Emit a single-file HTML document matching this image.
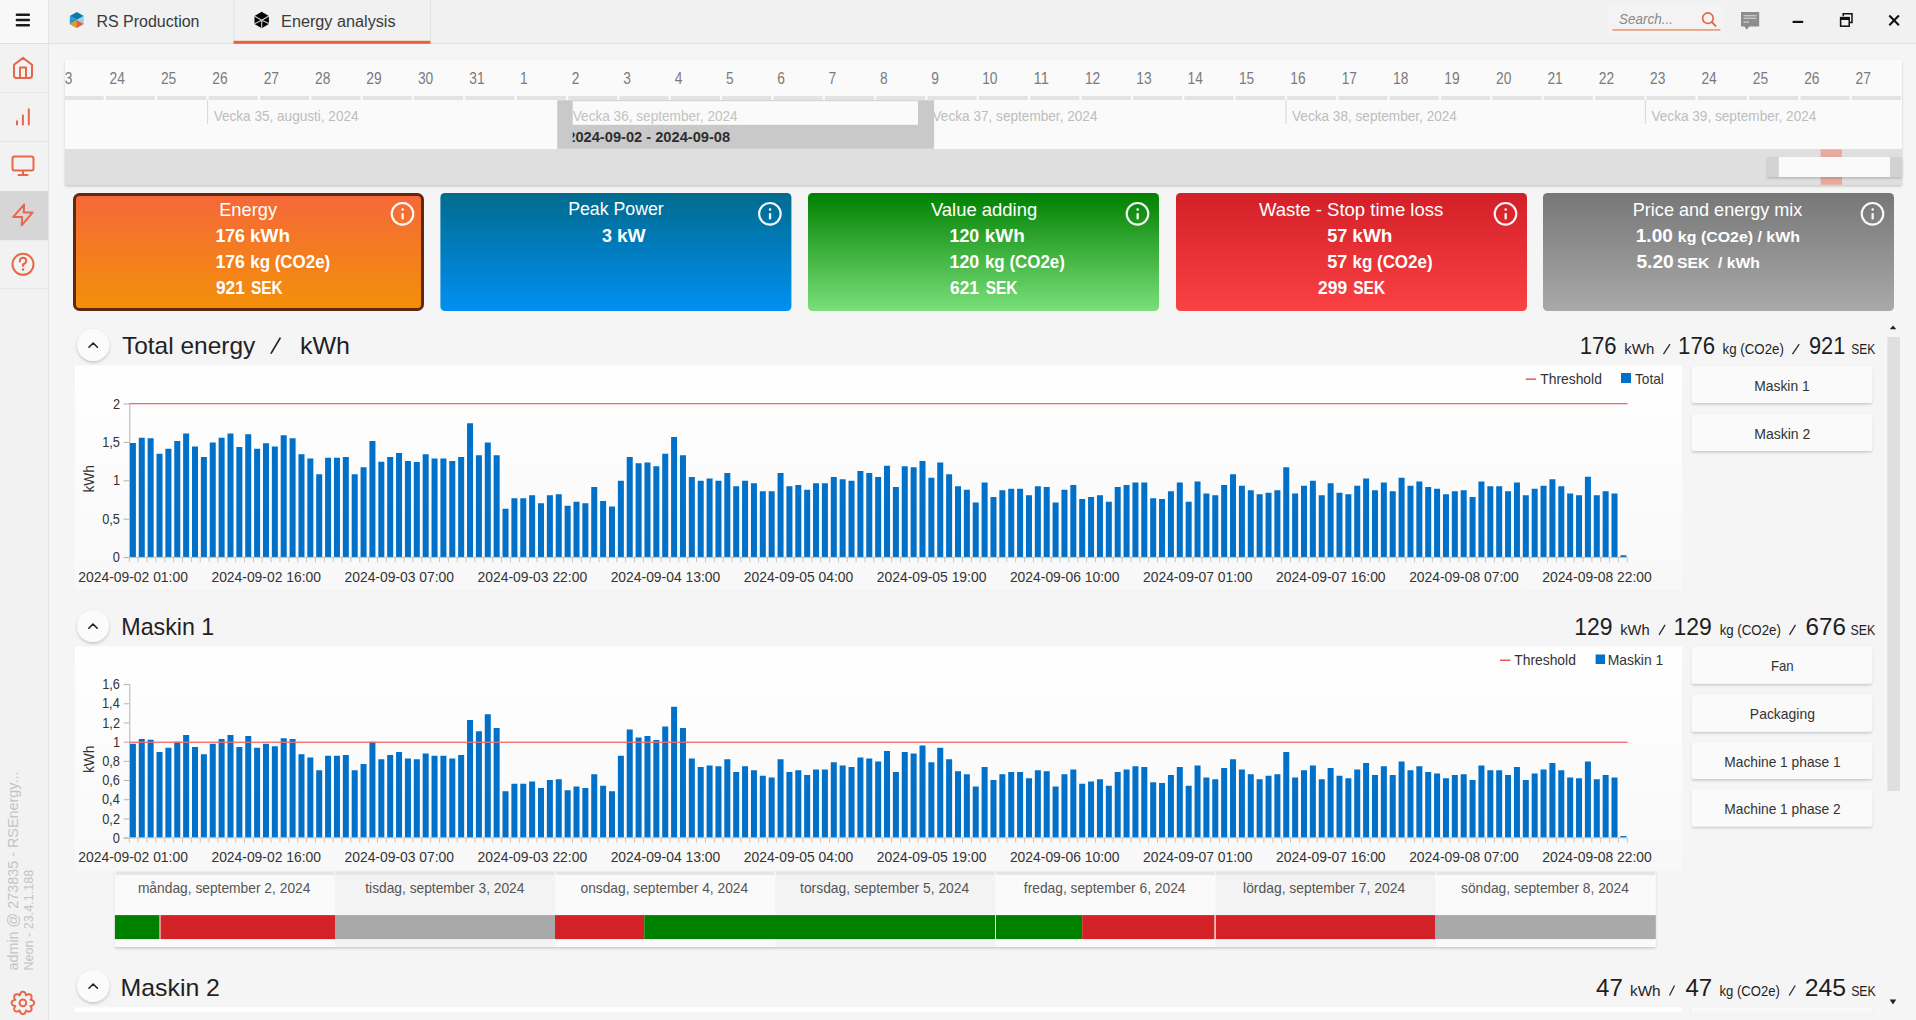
<!DOCTYPE html><html><head><meta charset="utf-8"><title>Energy analysis</title><style>html,body{margin:0;padding:0;background:#f5f5f5;overflow:hidden;width:1916px;height:1020px}svg{display:block;font-family:"Liberation Sans", sans-serif}text{font-family:"Liberation Sans", sans-serif}</style></head><body>
<svg width="1916" height="1020" viewBox="0 0 1916 1020">
<defs>
<linearGradient id="gOr" x1="0" y1="0" x2="0" y2="1"><stop offset="0" stop-color="#f5683a"/><stop offset="1" stop-color="#f39008"/></linearGradient>
<linearGradient id="gBl" x1="0" y1="0" x2="0" y2="1"><stop offset="0" stop-color="#006b8e"/><stop offset="1" stop-color="#0090f2"/></linearGradient>
<linearGradient id="gGr" x1="0" y1="0" x2="0" y2="1"><stop offset="0" stop-color="#008000"/><stop offset="1" stop-color="#7ae07a"/></linearGradient>
<linearGradient id="gRd" x1="0" y1="0" x2="0" y2="1"><stop offset="0" stop-color="#d31f28"/><stop offset="1" stop-color="#fa4244"/></linearGradient>
<linearGradient id="gGy" x1="0" y1="0" x2="0" y2="1"><stop offset="0" stop-color="#777777"/><stop offset="1" stop-color="#a9a9a9"/></linearGradient>
<linearGradient id="gPanel" x1="0" y1="0" x2="0" y2="1"><stop offset="0" stop-color="#ffffff"/><stop offset="0.12" stop-color="#fefefe"/><stop offset="1" stop-color="#f8f8f8"/></linearGradient>
<filter id="sh" x="-10%" y="-10%" width="120%" height="140%"><feDropShadow dx="0" dy="1.5" stdDeviation="1.2" flood-color="#000" flood-opacity="0.18"/></filter>
<filter id="shc" x="-30%" y="-30%" width="160%" height="160%"><feDropShadow dx="0" dy="1.5" stdDeviation="1.5" flood-color="#000" flood-opacity="0.22"/></filter>
<clipPath id="clipTL"><rect x="65" y="60" width="1837" height="125"/></clipPath>
<clipPath id="clipSel"><rect x="572.7" y="101" width="345.3" height="48"/></clipPath>
</defs>
<rect x="0.00" y="0.00" width="1916.00" height="1020.00" fill="#f5f5f5" />
<rect x="0.00" y="0.00" width="1916.00" height="43.00" fill="#f1f1f1" />
<rect x="0.00" y="0.00" width="48.00" height="43.00" fill="#f8f8f8" />
<rect x="48.00" y="0.00" width="1.00" height="43.00" fill="#e6e6e6" />
<rect x="0.00" y="43.00" width="1916.00" height="1.00" fill="#e0e0e0" />
<rect x="15.7" y="13.5" width="14.3" height="2.6" rx="1" fill="#1a1a1a"/>
<rect x="15.7" y="18.7" width="14.3" height="2.6" rx="1" fill="#1a1a1a"/>
<rect x="15.7" y="24" width="14.3" height="2.6" rx="1" fill="#1a1a1a"/>
<g transform="translate(76.8,19.9)">
<path d="M0,-8 L7,-4 L0,0 L-7,-4 Z" fill="#0a7ab0"/>
<path d="M-7,-4 L0,0 L0,8 L-7,4 Z" fill="#2a98cf"/>
<path d="M7,-4 L7,4 L0,0 Z" fill="#8fd6f5"/>
<path d="M-7,4 L0,0 L0,8 Z" fill="#f39a1c"/>
<path d="M0,0 L7,4 L0,8 Z" fill="#e8603c"/>
</g>
<text x="96.39" y="26.50" font-size="16" fill="#3a3a3a" textLength="103.15" lengthAdjust="spacingAndGlyphs">RS Production</text>
<rect x="233.50" y="0.00" width="1.00" height="43.00" fill="#e4e4e4" />
<rect x="430.00" y="0.00" width="1.00" height="43.00" fill="#e4e4e4" />
<rect x="233.50" y="40.80" width="197.00" height="3.00" fill="#e8603c" />
<g transform="translate(261.7,20.0)">
<path d="M0,-8.2 L7.2,-4.1 L7.2,4.1 L0,8.2 L-7.2,4.1 L-7.2,-4.1 Z" fill="#050505"/>
<path d="M-7.2,-4 L0,0.3 L7.2,-4 M0,0.3 V8.4 M0,0.3 L-7.2,3.7 M0,0.3 L7.2,3.5" stroke="#f1f1f1" stroke-width="1.15" fill="none" opacity="0.85"/>
</g>
<text x="281.07" y="26.50" font-size="16" fill="#3a3a3a" textLength="114.52" lengthAdjust="spacingAndGlyphs">Energy analysis</text>
<rect x="1606.60" y="5.00" width="117.00" height="31.00" fill="#f3f3f3" />
<text x="1619.12" y="24.20" font-size="14" fill="#8a8a8a" font-style="italic" textLength="53.83" lengthAdjust="spacingAndGlyphs">Search...</text>
<rect x="1612.40" y="29.00" width="108.00" height="1.80" fill="#f2a07c" />
<circle cx="1707.9" cy="18.2" r="5.3" stroke="#e8603c" stroke-width="1.6" fill="none"/>
<line x1="1711.8" y1="22.1" x2="1715.6" y2="25.8" stroke="#e8603c" stroke-width="1.8" stroke-linecap="round"/>
<path d="M1741,12 H1759.2 V26.4 H1749.5 L1746.5,29.7 L1744.5,26.4 H1741 Z" fill="#8c8c8c"/>
<rect x="1743.50" y="15.20" width="13.00" height="1.10" fill="#d8d8d8" />
<rect x="1743.50" y="17.70" width="13.00" height="1.10" fill="#d8d8d8" />
<rect x="1743.50" y="21.50" width="5.50" height="1.10" fill="#d8d8d8" />
<rect x="1792.60" y="20.80" width="10.60" height="2.20" fill="#111" />
<path d="M1843.2,16.3 V13.8 H1852 V22.5 H1849.5" stroke="#111" stroke-width="1.5" fill="none"/>
<rect x="1840.6" y="17.6" width="8.6" height="8.6" stroke="#111" stroke-width="1.5" fill="none"/>
<rect x="1840.60" y="17.60" width="8.60" height="2.40" fill="#111" />
<path d="M1889.3,15.6 L1898.9,25.2 M1898.9,15.6 L1889.3,25.2" stroke="#111" stroke-width="2.1"/>
<rect x="0.00" y="44.00" width="48.00" height="976.00" fill="#f2f2f2" />
<rect x="48.00" y="44.00" width="1.00" height="976.00" fill="#e4e4e4" />
<rect x="0.00" y="92.00" width="48.00" height="1.00" fill="#e6e6e6" />
<rect x="0.00" y="141.00" width="48.00" height="1.00" fill="#e6e6e6" />
<rect x="0.00" y="239.50" width="48.00" height="1.00" fill="#e6e6e6" />
<rect x="0.00" y="288.00" width="48.00" height="1.00" fill="#e6e6e6" />
<rect x="0.00" y="191.00" width="48.00" height="49.00" fill="#d6d6d6" />
<path d="M14,75.6 V64.8 L23,57.9 L32,64.8 V75.6 Q32,78 29.6,78 H16.4 Q14,78 14,75.6 Z M20,78 V67.6 H26 V78" stroke="#e8664a" stroke-width="2" fill="none" stroke-linecap="round" stroke-linejoin="round"/>
<path d="M17,124.6 V121.2 M22.9,124.6 V115.4 M28.8,124.6 V109.3" stroke="#e8664a" stroke-width="2" fill="none" stroke-linecap="round" stroke-linejoin="round" stroke-width="2.2"/>
<rect x="12.5" y="156.5" width="21" height="14" rx="2" stroke="#e8664a" stroke-width="2" fill="none" stroke-linecap="round" stroke-linejoin="round"/>
<path d="M23,171 V174.5 M18.5,175 H27.5" stroke="#e8664a" stroke-width="2" fill="none" stroke-linecap="round" stroke-linejoin="round"/>
<path d="M24.1,204.6 L13.3,216.9 H22.2 L21.7,225.3 L32.5,212.6 H23.7 Z" stroke="#e8664a" stroke-width="2" fill="none" stroke-linecap="round" stroke-linejoin="round"/>
<circle cx="23" cy="264.3" r="10.5" stroke="#e8664a" stroke-width="2" fill="none" stroke-linecap="round" stroke-linejoin="round"/>
<path d="M19.8,261.5 Q19.8,257.8 23,257.8 Q26.3,257.8 26.3,261 Q26.3,263 23,264.5 V266" stroke="#e8664a" stroke-width="2" fill="none" stroke-linecap="round" stroke-linejoin="round" stroke-width="1.9"/>
<circle cx="23" cy="269.5" r="1.2" fill="#e8603c"/>
<text transform="translate(18,970.6) rotate(-90)" font-size="15" fill="#c4c4c4" textLength="199" lengthAdjust="spacingAndGlyphs">admin @ 273835 - RSEnergy...</text>
<text transform="translate(32.7,970.6) rotate(-90)" font-size="13.5" fill="#c4c4c4" textLength="100.8" lengthAdjust="spacingAndGlyphs">Neon - 23.4.1.188</text>
<path d="M34.15,1002.90 L34.13,1003.19 L34.07,1003.49 L33.98,1003.77 L33.85,1004.05 L33.68,1004.32 L33.48,1004.58 L33.25,1004.82 L32.98,1005.04 L32.69,1005.25 L32.38,1005.44 L32.04,1005.61 L31.68,1005.75 L31.29,1005.87 L30.89,1005.97 L30.43,1006.02 L30.72,1006.38 L30.94,1006.73 L31.12,1007.09 L31.27,1007.45 L31.40,1007.81 L31.49,1008.16 L31.55,1008.51 L31.57,1008.86 L31.57,1009.20 L31.53,1009.52 L31.45,1009.83 L31.35,1010.12 L31.22,1010.39 L31.05,1010.63 L30.85,1010.85 L30.63,1011.05 L30.39,1011.22 L30.12,1011.35 L29.83,1011.45 L29.52,1011.53 L29.20,1011.57 L28.86,1011.57 L28.51,1011.55 L28.16,1011.49 L27.81,1011.40 L27.45,1011.27 L27.09,1011.12 L26.73,1010.94 L26.38,1010.72 L26.02,1010.43 L25.97,1010.89 L25.87,1011.29 L25.75,1011.68 L25.61,1012.04 L25.44,1012.38 L25.25,1012.69 L25.04,1012.98 L24.82,1013.25 L24.58,1013.48 L24.32,1013.68 L24.05,1013.85 L23.77,1013.98 L23.49,1014.07 L23.19,1014.13 L22.90,1014.15 L22.61,1014.13 L22.31,1014.07 L22.03,1013.98 L21.75,1013.85 L21.48,1013.68 L21.22,1013.48 L20.98,1013.25 L20.76,1012.98 L20.55,1012.69 L20.36,1012.38 L20.19,1012.04 L20.05,1011.68 L19.93,1011.29 L19.83,1010.89 L19.78,1010.43 L19.42,1010.72 L19.07,1010.94 L18.71,1011.12 L18.35,1011.27 L17.99,1011.40 L17.64,1011.49 L17.29,1011.55 L16.94,1011.57 L16.60,1011.57 L16.28,1011.53 L15.97,1011.45 L15.68,1011.35 L15.41,1011.22 L15.17,1011.05 L14.95,1010.85 L14.75,1010.63 L14.58,1010.39 L14.45,1010.12 L14.35,1009.83 L14.27,1009.52 L14.23,1009.20 L14.23,1008.86 L14.25,1008.51 L14.31,1008.16 L14.40,1007.81 L14.53,1007.45 L14.68,1007.09 L14.86,1006.73 L15.08,1006.38 L15.37,1006.02 L14.91,1005.97 L14.51,1005.87 L14.12,1005.75 L13.76,1005.61 L13.42,1005.44 L13.11,1005.25 L12.82,1005.04 L12.55,1004.82 L12.32,1004.58 L12.12,1004.32 L11.95,1004.05 L11.82,1003.77 L11.73,1003.49 L11.67,1003.19 L11.65,1002.90 L11.67,1002.61 L11.73,1002.31 L11.82,1002.03 L11.95,1001.75 L12.12,1001.48 L12.32,1001.22 L12.55,1000.98 L12.82,1000.76 L13.11,1000.55 L13.42,1000.36 L13.76,1000.19 L14.12,1000.05 L14.51,999.93 L14.91,999.83 L15.37,999.78 L15.08,999.42 L14.86,999.07 L14.68,998.71 L14.53,998.35 L14.40,997.99 L14.31,997.64 L14.25,997.29 L14.23,996.94 L14.23,996.60 L14.27,996.28 L14.35,995.97 L14.45,995.68 L14.58,995.41 L14.75,995.17 L14.95,994.95 L15.17,994.75 L15.41,994.58 L15.68,994.45 L15.97,994.35 L16.28,994.27 L16.60,994.23 L16.94,994.23 L17.29,994.25 L17.64,994.31 L17.99,994.40 L18.35,994.53 L18.71,994.68 L19.07,994.86 L19.42,995.08 L19.78,995.37 L19.83,994.91 L19.93,994.51 L20.05,994.12 L20.19,993.76 L20.36,993.42 L20.55,993.11 L20.76,992.82 L20.98,992.55 L21.22,992.32 L21.48,992.12 L21.75,991.95 L22.03,991.82 L22.31,991.73 L22.61,991.67 L22.90,991.65 L23.19,991.67 L23.49,991.73 L23.77,991.82 L24.05,991.95 L24.32,992.12 L24.58,992.32 L24.82,992.55 L25.04,992.82 L25.25,993.11 L25.44,993.42 L25.61,993.76 L25.75,994.12 L25.87,994.51 L25.97,994.91 L26.02,995.37 L26.38,995.08 L26.73,994.86 L27.09,994.68 L27.45,994.53 L27.81,994.40 L28.16,994.31 L28.51,994.25 L28.86,994.23 L29.20,994.23 L29.52,994.27 L29.83,994.35 L30.12,994.45 L30.39,994.58 L30.63,994.75 L30.85,994.95 L31.05,995.17 L31.22,995.41 L31.35,995.68 L31.45,995.97 L31.53,996.28 L31.57,996.60 L31.57,996.94 L31.55,997.29 L31.49,997.64 L31.40,997.99 L31.27,998.35 L31.12,998.71 L30.94,999.07 L30.72,999.42 L30.43,999.78 L30.89,999.83 L31.29,999.93 L31.68,1000.05 L32.04,1000.19 L32.38,1000.36 L32.69,1000.55 L32.98,1000.76 L33.25,1000.98 L33.48,1001.22 L33.68,1001.48 L33.85,1001.75 L33.98,1002.03 L34.07,1002.31 L34.13,1002.61 Z" stroke="#e8664a" stroke-width="2" fill="none" stroke-linecap="round" stroke-linejoin="round" stroke-width="2"/>
<circle cx="22.9" cy="1002.9" r="3.3" stroke="#e8664a" stroke-width="2" fill="none" stroke-linecap="round" stroke-linejoin="round" stroke-width="2"/>
<g filter="url(#sh)">
<rect x="65.00" y="60.00" width="1837.00" height="125.00" fill="#fafafa" />
</g>
<rect x="65.00" y="149.00" width="1837.00" height="36.00" fill="#dfdfdf" />
<g clip-path="url(#clipTL)">
<text x="64.68" y="84.40" font-size="16" fill="#7a7a7a" textLength="7.65" lengthAdjust="spacingAndGlyphs">3</text>
<rect x="54.65" y="96.00" width="49.00" height="4.00" fill="#e3e3e3" />
<text x="109.61" y="84.40" font-size="16" fill="#7a7a7a" textLength="15.31" lengthAdjust="spacingAndGlyphs">24</text>
<rect x="106.00" y="96.00" width="49.00" height="4.00" fill="#e3e3e3" />
<text x="160.96" y="84.40" font-size="16" fill="#7a7a7a" textLength="15.31" lengthAdjust="spacingAndGlyphs">25</text>
<rect x="157.35" y="96.00" width="49.00" height="4.00" fill="#e3e3e3" />
<text x="212.31" y="84.40" font-size="16" fill="#7a7a7a" textLength="15.31" lengthAdjust="spacingAndGlyphs">26</text>
<rect x="208.70" y="96.00" width="49.00" height="4.00" fill="#e3e3e3" />
<text x="263.66" y="84.40" font-size="16" fill="#7a7a7a" textLength="15.31" lengthAdjust="spacingAndGlyphs">27</text>
<rect x="260.05" y="96.00" width="49.00" height="4.00" fill="#e3e3e3" />
<text x="315.01" y="84.40" font-size="16" fill="#7a7a7a" textLength="15.31" lengthAdjust="spacingAndGlyphs">28</text>
<rect x="311.40" y="96.00" width="49.00" height="4.00" fill="#e3e3e3" />
<text x="366.36" y="84.40" font-size="16" fill="#7a7a7a" textLength="15.31" lengthAdjust="spacingAndGlyphs">29</text>
<rect x="362.75" y="96.00" width="49.00" height="4.00" fill="#e3e3e3" />
<text x="417.88" y="84.40" font-size="16" fill="#7a7a7a" textLength="15.31" lengthAdjust="spacingAndGlyphs">30</text>
<rect x="414.10" y="96.00" width="49.00" height="4.00" fill="#e3e3e3" />
<text x="469.23" y="84.40" font-size="16" fill="#7a7a7a" textLength="15.31" lengthAdjust="spacingAndGlyphs">31</text>
<rect x="465.45" y="96.00" width="49.00" height="4.00" fill="#e3e3e3" />
<text x="520.05" y="84.40" font-size="16" fill="#7a7a7a" textLength="7.65" lengthAdjust="spacingAndGlyphs">1</text>
<rect x="516.80" y="96.00" width="49.00" height="4.00" fill="#e3e3e3" />
<text x="571.76" y="84.40" font-size="16" fill="#7a7a7a" textLength="7.65" lengthAdjust="spacingAndGlyphs">2</text>
<rect x="568.15" y="96.00" width="49.00" height="4.00" fill="#e3e3e3" />
<text x="623.28" y="84.40" font-size="16" fill="#7a7a7a" textLength="7.65" lengthAdjust="spacingAndGlyphs">3</text>
<rect x="619.50" y="96.00" width="49.00" height="4.00" fill="#e3e3e3" />
<text x="674.83" y="84.40" font-size="16" fill="#7a7a7a" textLength="7.65" lengthAdjust="spacingAndGlyphs">4</text>
<rect x="670.85" y="96.00" width="49.00" height="4.00" fill="#e3e3e3" />
<text x="725.95" y="84.40" font-size="16" fill="#7a7a7a" textLength="7.65" lengthAdjust="spacingAndGlyphs">5</text>
<rect x="722.20" y="96.00" width="49.00" height="4.00" fill="#e3e3e3" />
<text x="777.15" y="84.40" font-size="16" fill="#7a7a7a" textLength="7.65" lengthAdjust="spacingAndGlyphs">6</text>
<rect x="773.55" y="96.00" width="49.00" height="4.00" fill="#e3e3e3" />
<text x="828.49" y="84.40" font-size="16" fill="#7a7a7a" textLength="7.65" lengthAdjust="spacingAndGlyphs">7</text>
<rect x="824.90" y="96.00" width="49.00" height="4.00" fill="#e3e3e3" />
<text x="879.95" y="84.40" font-size="16" fill="#7a7a7a" textLength="7.65" lengthAdjust="spacingAndGlyphs">8</text>
<rect x="876.25" y="96.00" width="49.00" height="4.00" fill="#e3e3e3" />
<text x="931.25" y="84.40" font-size="16" fill="#7a7a7a" textLength="7.65" lengthAdjust="spacingAndGlyphs">9</text>
<rect x="927.60" y="96.00" width="49.00" height="4.00" fill="#e3e3e3" />
<text x="982.20" y="84.40" font-size="16" fill="#7a7a7a" textLength="15.31" lengthAdjust="spacingAndGlyphs">10</text>
<rect x="978.95" y="96.00" width="49.00" height="4.00" fill="#e3e3e3" />
<text x="1033.55" y="84.40" font-size="16" fill="#7a7a7a" textLength="15.31" lengthAdjust="spacingAndGlyphs">11</text>
<rect x="1030.30" y="96.00" width="49.00" height="4.00" fill="#e3e3e3" />
<text x="1084.90" y="84.40" font-size="16" fill="#7a7a7a" textLength="15.31" lengthAdjust="spacingAndGlyphs">12</text>
<rect x="1081.65" y="96.00" width="49.00" height="4.00" fill="#e3e3e3" />
<text x="1136.25" y="84.40" font-size="16" fill="#7a7a7a" textLength="15.31" lengthAdjust="spacingAndGlyphs">13</text>
<rect x="1133.00" y="96.00" width="49.00" height="4.00" fill="#e3e3e3" />
<text x="1187.60" y="84.40" font-size="16" fill="#7a7a7a" textLength="15.31" lengthAdjust="spacingAndGlyphs">14</text>
<rect x="1184.35" y="96.00" width="49.00" height="4.00" fill="#e3e3e3" />
<text x="1238.95" y="84.40" font-size="16" fill="#7a7a7a" textLength="15.31" lengthAdjust="spacingAndGlyphs">15</text>
<rect x="1235.70" y="96.00" width="49.00" height="4.00" fill="#e3e3e3" />
<text x="1290.30" y="84.40" font-size="16" fill="#7a7a7a" textLength="15.31" lengthAdjust="spacingAndGlyphs">16</text>
<rect x="1287.05" y="96.00" width="49.00" height="4.00" fill="#e3e3e3" />
<text x="1341.65" y="84.40" font-size="16" fill="#7a7a7a" textLength="15.31" lengthAdjust="spacingAndGlyphs">17</text>
<rect x="1338.40" y="96.00" width="49.00" height="4.00" fill="#e3e3e3" />
<text x="1393.00" y="84.40" font-size="16" fill="#7a7a7a" textLength="15.31" lengthAdjust="spacingAndGlyphs">18</text>
<rect x="1389.75" y="96.00" width="49.00" height="4.00" fill="#e3e3e3" />
<text x="1444.35" y="84.40" font-size="16" fill="#7a7a7a" textLength="15.31" lengthAdjust="spacingAndGlyphs">19</text>
<rect x="1441.10" y="96.00" width="49.00" height="4.00" fill="#e3e3e3" />
<text x="1496.06" y="84.40" font-size="16" fill="#7a7a7a" textLength="15.31" lengthAdjust="spacingAndGlyphs">20</text>
<rect x="1492.45" y="96.00" width="49.00" height="4.00" fill="#e3e3e3" />
<text x="1547.41" y="84.40" font-size="16" fill="#7a7a7a" textLength="15.31" lengthAdjust="spacingAndGlyphs">21</text>
<rect x="1543.80" y="96.00" width="49.00" height="4.00" fill="#e3e3e3" />
<text x="1598.76" y="84.40" font-size="16" fill="#7a7a7a" textLength="15.31" lengthAdjust="spacingAndGlyphs">22</text>
<rect x="1595.15" y="96.00" width="49.00" height="4.00" fill="#e3e3e3" />
<text x="1650.11" y="84.40" font-size="16" fill="#7a7a7a" textLength="15.31" lengthAdjust="spacingAndGlyphs">23</text>
<rect x="1646.50" y="96.00" width="49.00" height="4.00" fill="#e3e3e3" />
<text x="1701.46" y="84.40" font-size="16" fill="#7a7a7a" textLength="15.31" lengthAdjust="spacingAndGlyphs">24</text>
<rect x="1697.85" y="96.00" width="49.00" height="4.00" fill="#e3e3e3" />
<text x="1752.81" y="84.40" font-size="16" fill="#7a7a7a" textLength="15.31" lengthAdjust="spacingAndGlyphs">25</text>
<rect x="1749.20" y="96.00" width="49.00" height="4.00" fill="#e3e3e3" />
<text x="1804.16" y="84.40" font-size="16" fill="#7a7a7a" textLength="15.31" lengthAdjust="spacingAndGlyphs">26</text>
<rect x="1800.55" y="96.00" width="49.00" height="4.00" fill="#e3e3e3" />
<text x="1855.51" y="84.40" font-size="16" fill="#7a7a7a" textLength="15.31" lengthAdjust="spacingAndGlyphs">27</text>
<rect x="1851.90" y="96.00" width="49.00" height="4.00" fill="#e3e3e3" />
<rect x="207.10" y="99.60" width="1.00" height="24.40" fill="#d6d6d6" />
<text x="213.64" y="120.90" font-size="15" fill="#bdbdbd" textLength="144.96" lengthAdjust="spacingAndGlyphs">Vecka 35, augusti, 2024</text>
<rect x="926.00" y="99.60" width="1.00" height="24.40" fill="#d6d6d6" />
<text x="932.54" y="120.90" font-size="15" fill="#bdbdbd" textLength="164.95" lengthAdjust="spacingAndGlyphs">Vecka 37, september, 2024</text>
<rect x="1285.45" y="99.60" width="1.00" height="24.40" fill="#d6d6d6" />
<text x="1291.99" y="120.90" font-size="15" fill="#bdbdbd" textLength="164.95" lengthAdjust="spacingAndGlyphs">Vecka 38, september, 2024</text>
<rect x="1644.90" y="99.60" width="1.00" height="24.40" fill="#d6d6d6" />
<text x="1651.44" y="120.90" font-size="15" fill="#bdbdbd" textLength="164.95" lengthAdjust="spacingAndGlyphs">Vecka 39, september, 2024</text>
</g>
<rect x="557.20" y="100.10" width="376.90" height="1.00" fill="#d2d2d2" />
<rect x="557.20" y="101.00" width="376.90" height="47.80" fill="#c9c9c9" />
<rect x="572.70" y="101.10" width="345.30" height="23.70" fill="#fafafa" />
<g clip-path="url(#clipSel)">
<text x="572.74" y="120.80" font-size="15" fill="#c2c2c2" textLength="164.95" lengthAdjust="spacingAndGlyphs">Vecka 36, september, 2024</text>
<text x="567.29" y="142.20" font-size="14.5" fill="#2e2e2e" font-weight="bold" textLength="162.86" lengthAdjust="spacingAndGlyphs">2024-09-02 - 2024-09-08</text>
</g>
<rect x="1820.70" y="149.40" width="21.30" height="35.40" fill="#e8aa9e" />
<g filter="url(#sh)">
<rect x="1767.00" y="157.00" width="135.00" height="20.00" fill="#d2d2d2" />
</g>
<rect x="1778.80" y="157.00" width="111.20" height="20.00" fill="#fafafa" />
<rect x="74.5" y="194.5" width="348" height="115" rx="5" fill="url(#gOr)" stroke="#62270f" stroke-width="3"/>
<circle cx="402.5" cy="213.8" r="10.8" stroke="#fff" stroke-width="2.1" fill="none" opacity="0.96"/>
<rect x="401.5" y="213.0" width="2.3" height="6.5" rx="1" fill="#fff" opacity="0.96"/>
<rect x="401.5" y="208.3" width="2.3" height="2.5" rx="0.8" fill="#fff" opacity="0.96"/>
<rect x="440.4" y="193" width="351" height="118" rx="4.5" fill="url(#gBl)"/>
<circle cx="769.9" cy="213.8" r="10.8" stroke="#fff" stroke-width="2.1" fill="none" opacity="0.96"/>
<rect x="768.9" y="213.0" width="2.3" height="6.5" rx="1" fill="#fff" opacity="0.96"/>
<rect x="768.9" y="208.3" width="2.3" height="2.5" rx="0.8" fill="#fff" opacity="0.96"/>
<rect x="808" y="193" width="351" height="118" rx="4.5" fill="url(#gGr)"/>
<circle cx="1137.5" cy="213.8" r="10.8" stroke="#fff" stroke-width="2.1" fill="none" opacity="0.96"/>
<rect x="1136.5" y="213.0" width="2.3" height="6.5" rx="1" fill="#fff" opacity="0.96"/>
<rect x="1136.5" y="208.3" width="2.3" height="2.5" rx="0.8" fill="#fff" opacity="0.96"/>
<rect x="1176" y="193" width="351" height="118" rx="4.5" fill="url(#gRd)"/>
<circle cx="1505.5" cy="213.8" r="10.8" stroke="#fff" stroke-width="2.1" fill="none" opacity="0.96"/>
<rect x="1504.5" y="213.0" width="2.3" height="6.5" rx="1" fill="#fff" opacity="0.96"/>
<rect x="1504.5" y="208.3" width="2.3" height="2.5" rx="0.8" fill="#fff" opacity="0.96"/>
<rect x="1543" y="193" width="351" height="118" rx="4.5" fill="url(#gGy)"/>
<circle cx="1872.5" cy="213.8" r="10.8" stroke="#fff" stroke-width="2.1" fill="none" opacity="0.96"/>
<rect x="1871.5" y="213.0" width="2.3" height="6.5" rx="1" fill="#fff" opacity="0.96"/>
<rect x="1871.5" y="208.3" width="2.3" height="2.5" rx="0.8" fill="#fff" opacity="0.96"/>
<text x="219.20" y="215.50" font-size="18.5" fill="#fff" textLength="57.83" lengthAdjust="spacingAndGlyphs">Energy</text>
<text x="568.14" y="215.30" font-size="18.5" fill="#fff" textLength="95.65" lengthAdjust="spacingAndGlyphs">Peak Power</text>
<text x="930.92" y="215.50" font-size="18.5" fill="#fff" textLength="106.25" lengthAdjust="spacingAndGlyphs">Value adding</text>
<text x="1258.92" y="215.50" font-size="18.5" fill="#fff" textLength="184.35" lengthAdjust="spacingAndGlyphs">Waste - Stop time loss</text>
<text x="1632.82" y="215.50" font-size="18.5" fill="#fff" textLength="169.57" lengthAdjust="spacingAndGlyphs">Price and energy mix</text>
<text x="215.38" y="242.40" font-size="18.5" fill="#fff" font-weight="bold" textLength="29.56" lengthAdjust="spacingAndGlyphs">176</text>
<text x="250.08" y="242.40" font-size="18.5" fill="#fff" font-weight="bold" textLength="40.00" lengthAdjust="spacingAndGlyphs">kWh</text>
<text x="215.38" y="267.80" font-size="18.5" fill="#fff" font-weight="bold" textLength="29.56" lengthAdjust="spacingAndGlyphs">176</text>
<text x="250.22" y="267.80" font-size="18.5" fill="#fff" font-weight="bold" textLength="80.03" lengthAdjust="spacingAndGlyphs">kg (CO2e)</text>
<text x="215.90" y="293.70" font-size="18.5" fill="#fff" font-weight="bold" textLength="28.88" lengthAdjust="spacingAndGlyphs">921</text>
<text x="250.95" y="293.70" font-size="18.5" fill="#fff" font-weight="bold" textLength="31.89" lengthAdjust="spacingAndGlyphs">SEK</text>
<text x="602.09" y="242.40" font-size="18.5" fill="#fff" font-weight="bold" textLength="9.96" lengthAdjust="spacingAndGlyphs">3</text>
<text x="616.96" y="242.40" font-size="18.5" fill="#fff" font-weight="bold" textLength="28.76" lengthAdjust="spacingAndGlyphs">kW</text>
<text x="949.58" y="242.40" font-size="18.5" fill="#fff" font-weight="bold" textLength="29.65" lengthAdjust="spacingAndGlyphs">120</text>
<text x="984.78" y="242.40" font-size="18.5" fill="#fff" font-weight="bold" textLength="40.00" lengthAdjust="spacingAndGlyphs">kWh</text>
<text x="949.58" y="267.80" font-size="18.5" fill="#fff" font-weight="bold" textLength="29.65" lengthAdjust="spacingAndGlyphs">120</text>
<text x="984.92" y="267.80" font-size="18.5" fill="#fff" font-weight="bold" textLength="80.03" lengthAdjust="spacingAndGlyphs">kg (CO2e)</text>
<text x="950.07" y="293.70" font-size="18.5" fill="#fff" font-weight="bold" textLength="28.92" lengthAdjust="spacingAndGlyphs">621</text>
<text x="985.65" y="293.70" font-size="18.5" fill="#fff" font-weight="bold" textLength="31.89" lengthAdjust="spacingAndGlyphs">SEK</text>
<text x="1327.14" y="242.40" font-size="18.5" fill="#fff" font-weight="bold" textLength="20.15" lengthAdjust="spacingAndGlyphs">57</text>
<text x="1352.38" y="242.40" font-size="18.5" fill="#fff" font-weight="bold" textLength="40.00" lengthAdjust="spacingAndGlyphs">kWh</text>
<text x="1327.14" y="267.80" font-size="18.5" fill="#fff" font-weight="bold" textLength="20.15" lengthAdjust="spacingAndGlyphs">57</text>
<text x="1352.52" y="267.80" font-size="18.5" fill="#fff" font-weight="bold" textLength="80.03" lengthAdjust="spacingAndGlyphs">kg (CO2e)</text>
<text x="1318.10" y="293.70" font-size="18.5" fill="#fff" font-weight="bold" textLength="29.05" lengthAdjust="spacingAndGlyphs">299</text>
<text x="1353.25" y="293.70" font-size="18.5" fill="#fff" font-weight="bold" textLength="31.89" lengthAdjust="spacingAndGlyphs">SEK</text>
<text x="1635.80" y="242.30" font-size="18.5" fill="#fff" font-weight="bold" textLength="36.98" lengthAdjust="spacingAndGlyphs">1.00</text>
<text x="1677.89" y="242.30" font-size="15.5" fill="#fff" font-weight="bold" textLength="122.10" lengthAdjust="spacingAndGlyphs">kg (CO2e) / kWh</text>
<text x="1636.41" y="267.70" font-size="18.5" fill="#fff" font-weight="bold" textLength="37.38" lengthAdjust="spacingAndGlyphs">5.20</text>
<text x="1677.05" y="267.70" font-size="15.5" fill="#fff" font-weight="bold" textLength="82.93" lengthAdjust="spacingAndGlyphs" xml:space="preserve">SEK  / kWh</text>
<g filter="url(#shc)"><circle cx="93.2" cy="345" r="16" fill="#fbfbfb"/></g>
<path d="M89.0,347.2 L93.2,343 L97.4,347.2" stroke="#222" stroke-width="1.6" fill="none" stroke-linecap="round" stroke-linejoin="round"/>
<text x="121.96" y="353.70" font-size="24" fill="#222" textLength="133.29" lengthAdjust="spacingAndGlyphs">Total energy</text>
<line x1="270.9" y1="353.6" x2="280.4" y2="337.6" stroke="#222" stroke-width="1.7"/>
<text x="300.02" y="353.70" font-size="24" fill="#222" textLength="50.01" lengthAdjust="spacingAndGlyphs">kWh</text>
<text x="1579.71" y="354.40" font-size="24" fill="#1e1e1e" textLength="36.96" lengthAdjust="spacingAndGlyphs">176</text>
<text x="1624.39" y="354.40" font-size="14.5" fill="#1e1e1e" textLength="29.88" lengthAdjust="spacingAndGlyphs">kWh</text>
<line x1="1663.50" y1="354.10" x2="1670.00" y2="344.10" stroke="#2a2a2a" stroke-width="1.3"/>
<text x="1678.11" y="354.40" font-size="24" fill="#1e1e1e" textLength="37.07" lengthAdjust="spacingAndGlyphs">176</text>
<text x="1722.61" y="354.40" font-size="14.5" fill="#1e1e1e" textLength="61.22" lengthAdjust="spacingAndGlyphs">kg (CO2e)</text>
<line x1="1792.50" y1="354.10" x2="1799.20" y2="344.10" stroke="#2a2a2a" stroke-width="1.3"/>
<text x="1808.98" y="354.40" font-size="24" fill="#1e1e1e" textLength="36.39" lengthAdjust="spacingAndGlyphs">921</text>
<text x="1851.16" y="354.40" font-size="14.5" fill="#1e1e1e" textLength="23.98" lengthAdjust="spacingAndGlyphs">SEK</text>
<path d="M1889.8,329.3 L1893.05,325.6 L1896.3,329.3 Z" fill="#222"/>
<rect x="1887.30" y="337.00" width="12.70" height="454.00" fill="#dfdfdf" />
<path d="M1889.7,999.5 L1896.2,999.5 L1892.95,1004.5 Z" fill="#222"/>
<rect x="75.00" y="365.50" width="1607.00" height="224.50" fill="url(#gPanel)" />
<rect x="129.30" y="403.50" width="1.00" height="153.60" fill="#b4b4b4" />
<rect x="123.60" y="403.50" width="5.70" height="1.00" fill="#b4b4b4" />
<text x="112.94" y="408.60" font-size="14.2" fill="#333" textLength="7.11" lengthAdjust="spacingAndGlyphs">2</text>
<rect x="123.60" y="441.90" width="5.70" height="1.00" fill="#b4b4b4" />
<text x="102.17" y="447.00" font-size="14.2" fill="#333" textLength="17.77" lengthAdjust="spacingAndGlyphs">1,5</text>
<rect x="123.60" y="480.30" width="5.70" height="1.00" fill="#b4b4b4" />
<text x="112.92" y="485.40" font-size="14.2" fill="#333" textLength="7.11" lengthAdjust="spacingAndGlyphs">1</text>
<rect x="123.60" y="518.70" width="5.70" height="1.00" fill="#b4b4b4" />
<text x="102.17" y="523.80" font-size="14.2" fill="#333" textLength="17.77" lengthAdjust="spacingAndGlyphs">0,5</text>
<rect x="123.60" y="557.10" width="5.70" height="1.00" fill="#b4b4b4" />
<text x="112.79" y="562.20" font-size="14.2" fill="#333" textLength="7.11" lengthAdjust="spacingAndGlyphs">0</text>
<text transform="translate(93.6,478.8) rotate(-90)" font-size="14.5" fill="#333" text-anchor="middle" textLength="27.5" lengthAdjust="spacingAndGlyphs">kWh</text>
<path d="M129.90,557.10h6.0v-114.12h-6.0z M138.77,557.10h6.0v-119.41h-6.0z M147.64,557.10h6.0v-118.82h-6.0z M156.52,557.10h6.0v-103.33h-6.0z M165.39,557.10h6.0v-108.24h-6.0z M174.26,557.10h6.0v-116.08h-6.0z M183.13,557.10h6.0v-123.53h-6.0z M192.00,557.10h6.0v-110.59h-6.0z M200.88,557.10h6.0v-100.00h-6.0z M209.75,557.10h6.0v-114.71h-6.0z M218.62,557.10h6.0v-119.41h-6.0z M227.49,557.10h6.0v-123.53h-6.0z M236.36,557.10h6.0v-110.00h-6.0z M245.24,557.10h6.0v-122.75h-6.0z M254.11,557.10h6.0v-108.24h-6.0z M262.98,557.10h6.0v-113.92h-6.0z M271.85,557.10h6.0v-110.59h-6.0z M280.72,557.10h6.0v-121.96h-6.0z M289.60,557.10h6.0v-118.82h-6.0z M298.47,557.10h6.0v-102.75h-6.0z M307.34,557.10h6.0v-98.63h-6.0z M316.21,557.10h6.0v-82.75h-6.0z M325.08,557.10h6.0v-99.41h-6.0z M333.96,557.10h6.0v-99.41h-6.0z M342.83,557.10h6.0v-100.00h-6.0z M351.70,557.10h6.0v-82.75h-6.0z M360.57,557.10h6.0v-89.80h-6.0z M369.44,557.10h6.0v-116.08h-6.0z M378.32,557.10h6.0v-95.29h-6.0z M387.19,557.10h6.0v-100.00h-6.0z M396.06,557.10h6.0v-104.12h-6.0z M404.93,557.10h6.0v-96.08h-6.0z M413.80,557.10h6.0v-95.10h-6.0z M422.68,557.10h6.0v-102.75h-6.0z M431.55,557.10h6.0v-98.63h-6.0z M440.42,557.10h6.0v-98.63h-6.0z M449.29,557.10h6.0v-96.08h-6.0z M458.16,557.10h6.0v-100.20h-6.0z M467.04,557.10h6.0v-133.73h-6.0z M475.91,557.10h6.0v-101.96h-6.0z M484.78,557.10h6.0v-114.71h-6.0z M493.65,557.10h6.0v-101.96h-6.0z M502.52,557.10h6.0v-48.24h-6.0z M511.40,557.10h6.0v-58.82h-6.0z M520.27,557.10h6.0v-58.82h-6.0z M529.14,557.10h6.0v-61.76h-6.0z M538.01,557.10h6.0v-53.92h-6.0z M546.88,557.10h6.0v-61.76h-6.0z M555.76,557.10h6.0v-62.75h-6.0z M564.63,557.10h6.0v-51.37h-6.0z M573.50,557.10h6.0v-55.29h-6.0z M582.37,557.10h6.0v-53.92h-6.0z M591.24,557.10h6.0v-70.00h-6.0z M600.12,557.10h6.0v-56.08h-6.0z M608.99,557.10h6.0v-50.59h-6.0z M617.86,557.10h6.0v-76.27h-6.0z M626.73,557.10h6.0v-100.20h-6.0z M635.60,557.10h6.0v-93.92h-6.0z M644.48,557.10h6.0v-94.51h-6.0z M653.35,557.10h6.0v-90.78h-6.0z M662.22,557.10h6.0v-103.33h-6.0z M671.09,557.10h6.0v-120.20h-6.0z M679.96,557.10h6.0v-101.96h-6.0z M688.84,557.10h6.0v-80.20h-6.0z M697.71,557.10h6.0v-76.27h-6.0z M706.58,557.10h6.0v-78.63h-6.0z M715.45,557.10h6.0v-76.27h-6.0z M724.32,557.10h6.0v-84.12h-6.0z M733.20,557.10h6.0v-70.78h-6.0z M742.07,557.10h6.0v-76.27h-6.0z M750.94,557.10h6.0v-73.92h-6.0z M759.81,557.10h6.0v-65.88h-6.0z M768.68,557.10h6.0v-65.88h-6.0z M777.56,557.10h6.0v-84.12h-6.0z M786.43,557.10h6.0v-70.78h-6.0z M795.30,557.10h6.0v-72.16h-6.0z M804.17,557.10h6.0v-67.25h-6.0z M813.04,557.10h6.0v-73.92h-6.0z M821.92,557.10h6.0v-73.92h-6.0z M830.79,557.10h6.0v-80.20h-6.0z M839.66,557.10h6.0v-77.84h-6.0z M848.53,557.10h6.0v-76.27h-6.0z M857.40,557.10h6.0v-86.08h-6.0z M866.28,557.10h6.0v-84.12h-6.0z M875.15,557.10h6.0v-80.20h-6.0z M884.02,557.10h6.0v-91.37h-6.0z M892.89,557.10h6.0v-70.00h-6.0z M901.76,557.10h6.0v-90.78h-6.0z M910.64,557.10h6.0v-89.80h-6.0z M919.51,557.10h6.0v-96.08h-6.0z M928.38,557.10h6.0v-79.41h-6.0z M937.25,557.10h6.0v-94.51h-6.0z M946.12,557.10h6.0v-82.75h-6.0z M955.00,557.10h6.0v-70.78h-6.0z M963.87,557.10h6.0v-67.25h-6.0z M972.74,557.10h6.0v-54.71h-6.0z M981.61,557.10h6.0v-74.71h-6.0z M990.48,557.10h6.0v-60.20h-6.0z M999.36,557.10h6.0v-66.86h-6.0z M1008.23,557.10h6.0v-68.24h-6.0z M1017.10,557.10h6.0v-68.24h-6.0z M1025.97,557.10h6.0v-61.96h-6.0z M1034.84,557.10h6.0v-70.78h-6.0z M1043.72,557.10h6.0v-70.00h-6.0z M1052.59,557.10h6.0v-54.71h-6.0z M1061.46,557.10h6.0v-67.25h-6.0z M1070.33,557.10h6.0v-72.16h-6.0z M1079.20,557.10h6.0v-58.04h-6.0z M1088.08,557.10h6.0v-60.20h-6.0z M1096.95,557.10h6.0v-61.96h-6.0z M1105.82,557.10h6.0v-55.29h-6.0z M1114.69,557.10h6.0v-70.00h-6.0z M1123.56,557.10h6.0v-72.16h-6.0z M1132.44,557.10h6.0v-74.71h-6.0z M1141.31,557.10h6.0v-74.71h-6.0z M1150.18,557.10h6.0v-58.82h-6.0z M1159.05,557.10h6.0v-58.04h-6.0z M1167.92,557.10h6.0v-65.88h-6.0z M1176.80,557.10h6.0v-74.71h-6.0z M1185.67,557.10h6.0v-55.29h-6.0z M1194.54,557.10h6.0v-75.49h-6.0z M1203.41,557.10h6.0v-63.53h-6.0z M1212.28,557.10h6.0v-61.96h-6.0z M1221.16,557.10h6.0v-72.16h-6.0z M1230.03,557.10h6.0v-82.75h-6.0z M1238.90,557.10h6.0v-71.37h-6.0z M1247.77,557.10h6.0v-66.86h-6.0z M1256.64,557.10h6.0v-62.75h-6.0z M1265.52,557.10h6.0v-64.31h-6.0z M1274.39,557.10h6.0v-66.86h-6.0z M1283.26,557.10h6.0v-89.80h-6.0z M1292.13,557.10h6.0v-63.53h-6.0z M1301.00,557.10h6.0v-71.37h-6.0z M1309.88,557.10h6.0v-76.27h-6.0z M1318.75,557.10h6.0v-61.96h-6.0z M1327.62,557.10h6.0v-73.92h-6.0z M1336.49,557.10h6.0v-64.31h-6.0z M1345.36,557.10h6.0v-62.75h-6.0z M1354.24,557.10h6.0v-71.37h-6.0z M1363.11,557.10h6.0v-78.63h-6.0z M1371.98,557.10h6.0v-66.86h-6.0z M1380.85,557.10h6.0v-74.71h-6.0z M1389.72,557.10h6.0v-65.88h-6.0z M1398.60,557.10h6.0v-79.41h-6.0z M1407.47,557.10h6.0v-71.37h-6.0z M1416.34,557.10h6.0v-75.49h-6.0z M1425.21,557.10h6.0v-70.00h-6.0z M1434.08,557.10h6.0v-68.24h-6.0z M1442.96,557.10h6.0v-62.75h-6.0z M1451.83,557.10h6.0v-65.88h-6.0z M1460.70,557.10h6.0v-66.86h-6.0z M1469.57,557.10h6.0v-60.20h-6.0z M1478.44,557.10h6.0v-75.49h-6.0z M1487.32,557.10h6.0v-70.78h-6.0z M1496.19,557.10h6.0v-70.78h-6.0z M1505.06,557.10h6.0v-65.88h-6.0z M1513.93,557.10h6.0v-74.71h-6.0z M1522.80,557.10h6.0v-61.96h-6.0z M1531.68,557.10h6.0v-68.24h-6.0z M1540.55,557.10h6.0v-71.37h-6.0z M1549.42,557.10h6.0v-77.84h-6.0z M1558.29,557.10h6.0v-70.78h-6.0z M1567.16,557.10h6.0v-63.53h-6.0z M1576.04,557.10h6.0v-61.96h-6.0z M1584.91,557.10h6.0v-80.39h-6.0z M1593.78,557.10h6.0v-61.96h-6.0z M1602.65,557.10h6.0v-65.88h-6.0z M1611.52,557.10h6.0v-63.53h-6.0z M1620.40,557.10h6.0v-1.76h-6.0z" fill="#0070c8"/>
<rect x="129.30" y="403.00" width="1498.30" height="1.30" fill="#f46a6a" />
<rect x="123.80" y="556.90" width="1503.80" height="1.00" fill="#bdbdbd" />
<path d="M129.30,557.90v4.2 M138.16,557.90v4.2 M147.03,557.90v4.2 M155.89,557.90v4.2 M164.76,557.90v4.2 M173.62,557.90v4.2 M182.48,557.90v4.2 M191.35,557.90v4.2 M200.21,557.90v4.2 M209.08,557.90v4.2 M217.94,557.90v4.2 M226.80,557.90v4.2 M235.67,557.90v4.2 M244.53,557.90v4.2 M253.40,557.90v4.2 M262.26,557.90v4.2 M271.12,557.90v4.2 M279.99,557.90v4.2 M288.85,557.90v4.2 M297.72,557.90v4.2 M306.58,557.90v4.2 M315.44,557.90v4.2 M324.31,557.90v4.2 M333.17,557.90v4.2 M342.04,557.90v4.2 M350.90,557.90v4.2 M359.76,557.90v4.2 M368.63,557.90v4.2 M377.49,557.90v4.2 M386.36,557.90v4.2 M395.22,557.90v4.2 M404.08,557.90v4.2 M412.95,557.90v4.2 M421.81,557.90v4.2 M430.68,557.90v4.2 M439.54,557.90v4.2 M448.40,557.90v4.2 M457.27,557.90v4.2 M466.13,557.90v4.2 M475.00,557.90v4.2 M483.86,557.90v4.2 M492.72,557.90v4.2 M501.59,557.90v4.2 M510.45,557.90v4.2 M519.32,557.90v4.2 M528.18,557.90v4.2 M537.04,557.90v4.2 M545.91,557.90v4.2 M554.77,557.90v4.2 M563.64,557.90v4.2 M572.50,557.90v4.2 M581.36,557.90v4.2 M590.23,557.90v4.2 M599.09,557.90v4.2 M607.96,557.90v4.2 M616.82,557.90v4.2 M625.68,557.90v4.2 M634.55,557.90v4.2 M643.41,557.90v4.2 M652.28,557.90v4.2 M661.14,557.90v4.2 M670.00,557.90v4.2 M678.87,557.90v4.2 M687.73,557.90v4.2 M696.60,557.90v4.2 M705.46,557.90v4.2 M714.32,557.90v4.2 M723.19,557.90v4.2 M732.05,557.90v4.2 M740.92,557.90v4.2 M749.78,557.90v4.2 M758.64,557.90v4.2 M767.51,557.90v4.2 M776.37,557.90v4.2 M785.24,557.90v4.2 M794.10,557.90v4.2 M802.96,557.90v4.2 M811.83,557.90v4.2 M820.69,557.90v4.2 M829.56,557.90v4.2 M838.42,557.90v4.2 M847.28,557.90v4.2 M856.15,557.90v4.2 M865.01,557.90v4.2 M873.88,557.90v4.2 M882.74,557.90v4.2 M891.60,557.90v4.2 M900.47,557.90v4.2 M909.33,557.90v4.2 M918.20,557.90v4.2 M927.06,557.90v4.2 M935.92,557.90v4.2 M944.79,557.90v4.2 M953.65,557.90v4.2 M962.52,557.90v4.2 M971.38,557.90v4.2 M980.24,557.90v4.2 M989.11,557.90v4.2 M997.97,557.90v4.2 M1006.84,557.90v4.2 M1015.70,557.90v4.2 M1024.56,557.90v4.2 M1033.43,557.90v4.2 M1042.29,557.90v4.2 M1051.16,557.90v4.2 M1060.02,557.90v4.2 M1068.88,557.90v4.2 M1077.75,557.90v4.2 M1086.61,557.90v4.2 M1095.48,557.90v4.2 M1104.34,557.90v4.2 M1113.20,557.90v4.2 M1122.07,557.90v4.2 M1130.93,557.90v4.2 M1139.80,557.90v4.2 M1148.66,557.90v4.2 M1157.52,557.90v4.2 M1166.39,557.90v4.2 M1175.25,557.90v4.2 M1184.12,557.90v4.2 M1192.98,557.90v4.2 M1201.84,557.90v4.2 M1210.71,557.90v4.2 M1219.57,557.90v4.2 M1228.44,557.90v4.2 M1237.30,557.90v4.2 M1246.16,557.90v4.2 M1255.03,557.90v4.2 M1263.89,557.90v4.2 M1272.76,557.90v4.2 M1281.62,557.90v4.2 M1290.48,557.90v4.2 M1299.35,557.90v4.2 M1308.21,557.90v4.2 M1317.08,557.90v4.2 M1325.94,557.90v4.2 M1334.80,557.90v4.2 M1343.67,557.90v4.2 M1352.53,557.90v4.2 M1361.40,557.90v4.2 M1370.26,557.90v4.2 M1379.12,557.90v4.2 M1387.99,557.90v4.2 M1396.85,557.90v4.2 M1405.72,557.90v4.2 M1414.58,557.90v4.2 M1423.44,557.90v4.2 M1432.31,557.90v4.2 M1441.17,557.90v4.2 M1450.04,557.90v4.2 M1458.90,557.90v4.2 M1467.76,557.90v4.2 M1476.63,557.90v4.2 M1485.49,557.90v4.2 M1494.36,557.90v4.2 M1503.22,557.90v4.2 M1512.08,557.90v4.2 M1520.95,557.90v4.2 M1529.81,557.90v4.2 M1538.68,557.90v4.2 M1547.54,557.90v4.2 M1556.40,557.90v4.2 M1565.27,557.90v4.2 M1574.13,557.90v4.2 M1583.00,557.90v4.2 M1591.86,557.90v4.2 M1600.72,557.90v4.2 M1609.59,557.90v4.2 M1618.45,557.90v4.2 M1627.32,557.90v4.2" stroke="#c4c4c4" stroke-width="1"/>
<text x="78.35" y="581.60" font-size="14.5" fill="#333" textLength="109.54" lengthAdjust="spacingAndGlyphs">2024-09-02 01:00</text>
<text x="211.43" y="581.60" font-size="14.5" fill="#333" textLength="109.54" lengthAdjust="spacingAndGlyphs">2024-09-02 16:00</text>
<text x="344.51" y="581.60" font-size="14.5" fill="#333" textLength="109.54" lengthAdjust="spacingAndGlyphs">2024-09-03 07:00</text>
<text x="477.59" y="581.60" font-size="14.5" fill="#333" textLength="109.54" lengthAdjust="spacingAndGlyphs">2024-09-03 22:00</text>
<text x="610.67" y="581.60" font-size="14.5" fill="#333" textLength="109.54" lengthAdjust="spacingAndGlyphs">2024-09-04 13:00</text>
<text x="743.75" y="581.60" font-size="14.5" fill="#333" textLength="109.54" lengthAdjust="spacingAndGlyphs">2024-09-05 04:00</text>
<text x="876.83" y="581.60" font-size="14.5" fill="#333" textLength="109.54" lengthAdjust="spacingAndGlyphs">2024-09-05 19:00</text>
<text x="1009.91" y="581.60" font-size="14.5" fill="#333" textLength="109.54" lengthAdjust="spacingAndGlyphs">2024-09-06 10:00</text>
<text x="1142.99" y="581.60" font-size="14.5" fill="#333" textLength="109.54" lengthAdjust="spacingAndGlyphs">2024-09-07 01:00</text>
<text x="1276.07" y="581.60" font-size="14.5" fill="#333" textLength="109.54" lengthAdjust="spacingAndGlyphs">2024-09-07 16:00</text>
<text x="1409.15" y="581.60" font-size="14.5" fill="#333" textLength="109.54" lengthAdjust="spacingAndGlyphs">2024-09-08 07:00</text>
<text x="1542.23" y="581.60" font-size="14.5" fill="#333" textLength="109.54" lengthAdjust="spacingAndGlyphs">2024-09-08 22:00</text>
<rect x="1525.70" y="378.50" width="10.50" height="1.30" fill="#f03c3c" />
<text x="1540.19" y="384.00" font-size="14.5" fill="#333" textLength="61.71" lengthAdjust="spacingAndGlyphs">Threshold</text>
<rect x="1621.00" y="373.00" width="10.00" height="10.00" fill="#0070c8" />
<text x="1634.91" y="384.00" font-size="14.5" fill="#333" textLength="28.96" lengthAdjust="spacingAndGlyphs">Total</text>
<g filter="url(#sh)">
<rect x="1691.70" y="366.00" width="180.40" height="37.00" fill="#fafafa" rx="2"/>
</g>
<text x="1754.26" y="390.60" font-size="14.5" fill="#333" textLength="55.41" lengthAdjust="spacingAndGlyphs">Maskin 1</text>
<g filter="url(#sh)">
<rect x="1691.70" y="413.90" width="180.40" height="37.00" fill="#fafafa" rx="2"/>
</g>
<text x="1754.25" y="438.50" font-size="14.5" fill="#333" textLength="56.05" lengthAdjust="spacingAndGlyphs">Maskin 2</text>
<g filter="url(#shc)"><circle cx="93" cy="626" r="16" fill="#fbfbfb"/></g>
<path d="M88.8,628.2 L93,624 L97.2,628.2" stroke="#222" stroke-width="1.6" fill="none" stroke-linecap="round" stroke-linejoin="round"/>
<text x="121.29" y="634.90" font-size="24" fill="#222" textLength="92.94" lengthAdjust="spacingAndGlyphs">Maskin 1</text>
<text x="1574.25" y="635.20" font-size="24" fill="#1e1e1e" textLength="38.34" lengthAdjust="spacingAndGlyphs">129</text>
<text x="1620.21" y="635.20" font-size="14.5" fill="#1e1e1e" textLength="29.45" lengthAdjust="spacingAndGlyphs">kWh</text>
<line x1="1659.00" y1="634.90" x2="1665.10" y2="624.90" stroke="#2a2a2a" stroke-width="1.3"/>
<text x="1673.55" y="635.20" font-size="24" fill="#1e1e1e" textLength="38.34" lengthAdjust="spacingAndGlyphs">129</text>
<text x="1719.71" y="635.20" font-size="14.5" fill="#1e1e1e" textLength="61.11" lengthAdjust="spacingAndGlyphs">kg (CO2e)</text>
<line x1="1789.50" y1="634.90" x2="1795.50" y2="624.90" stroke="#2a2a2a" stroke-width="1.3"/>
<text x="1805.47" y="635.20" font-size="24" fill="#1e1e1e" textLength="40.39" lengthAdjust="spacingAndGlyphs">676</text>
<text x="1850.44" y="635.20" font-size="14.5" fill="#1e1e1e" textLength="24.70" lengthAdjust="spacingAndGlyphs">SEK</text>
<rect x="75.00" y="646.50" width="1607.00" height="224.50" fill="url(#gPanel)" />
<rect x="129.30" y="684.10" width="1.00" height="153.50" fill="#b4b4b4" />
<rect x="123.60" y="837.60" width="5.70" height="1.00" fill="#b4b4b4" />
<text x="112.79" y="842.70" font-size="14.2" fill="#333" textLength="7.11" lengthAdjust="spacingAndGlyphs">0</text>
<rect x="123.60" y="818.41" width="5.70" height="1.00" fill="#b4b4b4" />
<text x="102.28" y="823.51" font-size="14.2" fill="#333" textLength="17.77" lengthAdjust="spacingAndGlyphs">0,2</text>
<rect x="123.60" y="799.22" width="5.70" height="1.00" fill="#b4b4b4" />
<text x="102.01" y="804.32" font-size="14.2" fill="#333" textLength="17.77" lengthAdjust="spacingAndGlyphs">0,4</text>
<rect x="123.60" y="780.03" width="5.70" height="1.00" fill="#b4b4b4" />
<text x="102.20" y="785.13" font-size="14.2" fill="#333" textLength="17.77" lengthAdjust="spacingAndGlyphs">0,6</text>
<rect x="123.60" y="760.84" width="5.70" height="1.00" fill="#b4b4b4" />
<text x="102.19" y="765.94" font-size="14.2" fill="#333" textLength="17.77" lengthAdjust="spacingAndGlyphs">0,8</text>
<rect x="123.60" y="741.65" width="5.70" height="1.00" fill="#b4b4b4" />
<text x="112.92" y="746.75" font-size="14.2" fill="#333" textLength="7.11" lengthAdjust="spacingAndGlyphs">1</text>
<rect x="123.60" y="722.46" width="5.70" height="1.00" fill="#b4b4b4" />
<text x="102.28" y="727.56" font-size="14.2" fill="#333" textLength="17.77" lengthAdjust="spacingAndGlyphs">1,2</text>
<rect x="123.60" y="703.27" width="5.70" height="1.00" fill="#b4b4b4" />
<text x="102.01" y="708.37" font-size="14.2" fill="#333" textLength="17.77" lengthAdjust="spacingAndGlyphs">1,4</text>
<rect x="123.60" y="684.08" width="5.70" height="1.00" fill="#b4b4b4" />
<text x="102.20" y="689.18" font-size="14.2" fill="#333" textLength="17.77" lengthAdjust="spacingAndGlyphs">1,6</text>
<text transform="translate(93.6,759.3) rotate(-90)" font-size="14.5" fill="#333" text-anchor="middle" textLength="27.5" lengthAdjust="spacingAndGlyphs">kWh</text>
<path d="M129.90,837.60h6.0v-93.73h-6.0z M138.77,837.60h6.0v-98.63h-6.0z M147.64,837.60h6.0v-97.84h-6.0z M156.52,837.60h6.0v-85.69h-6.0z M165.39,837.60h6.0v-89.80h-6.0z M174.26,837.60h6.0v-95.88h-6.0z M183.13,837.60h6.0v-102.55h-6.0z M192.00,837.60h6.0v-90.59h-6.0z M200.88,837.60h6.0v-83.33h-6.0z M209.75,837.60h6.0v-93.73h-6.0z M218.62,837.60h6.0v-98.63h-6.0z M227.49,837.60h6.0v-102.55h-6.0z M236.36,837.60h6.0v-90.59h-6.0z M245.24,837.60h6.0v-101.57h-6.0z M254.11,837.60h6.0v-89.80h-6.0z M262.98,837.60h6.0v-93.73h-6.0z M271.85,837.60h6.0v-91.37h-6.0z M280.72,837.60h6.0v-99.41h-6.0z M289.60,837.60h6.0v-98.63h-6.0z M298.47,837.60h6.0v-83.33h-6.0z M307.34,837.60h6.0v-80.00h-6.0z M316.21,837.60h6.0v-67.25h-6.0z M325.08,837.60h6.0v-81.76h-6.0z M333.96,837.60h6.0v-81.76h-6.0z M342.83,837.60h6.0v-82.55h-6.0z M351.70,837.60h6.0v-67.25h-6.0z M360.57,837.60h6.0v-73.53h-6.0z M369.44,837.60h6.0v-95.88h-6.0z M378.32,837.60h6.0v-78.43h-6.0z M387.19,837.60h6.0v-82.55h-6.0z M396.06,837.60h6.0v-85.69h-6.0z M404.93,837.60h6.0v-79.22h-6.0z M413.80,837.60h6.0v-78.43h-6.0z M422.68,837.60h6.0v-84.12h-6.0z M431.55,837.60h6.0v-81.76h-6.0z M440.42,837.60h6.0v-81.76h-6.0z M449.29,837.60h6.0v-79.22h-6.0z M458.16,837.60h6.0v-82.55h-6.0z M467.04,837.60h6.0v-117.65h-6.0z M475.91,837.60h6.0v-106.47h-6.0z M484.78,837.60h6.0v-123.33h-6.0z M493.65,837.60h6.0v-109.61h-6.0z M502.52,837.60h6.0v-46.47h-6.0z M511.40,837.60h6.0v-53.73h-6.0z M520.27,837.60h6.0v-53.73h-6.0z M529.14,837.60h6.0v-56.08h-6.0z M538.01,837.60h6.0v-49.61h-6.0z M546.88,837.60h6.0v-57.65h-6.0z M555.76,837.60h6.0v-58.43h-6.0z M564.63,837.60h6.0v-47.25h-6.0z M573.50,837.60h6.0v-51.18h-6.0z M582.37,837.60h6.0v-49.61h-6.0z M591.24,837.60h6.0v-63.33h-6.0z M600.12,837.60h6.0v-51.96h-6.0z M608.99,837.60h6.0v-46.47h-6.0z M617.86,837.60h6.0v-81.76h-6.0z M626.73,837.60h6.0v-108.04h-6.0z M635.60,837.60h6.0v-100.00h-6.0z M644.48,837.60h6.0v-101.57h-6.0z M653.35,837.60h6.0v-97.65h-6.0z M662.22,837.60h6.0v-111.18h-6.0z M671.09,837.60h6.0v-130.78h-6.0z M679.96,837.60h6.0v-109.61h-6.0z M688.84,837.60h6.0v-79.22h-6.0z M697.71,837.60h6.0v-70.59h-6.0z M706.58,837.60h6.0v-72.16h-6.0z M715.45,837.60h6.0v-71.37h-6.0z M724.32,837.60h6.0v-78.43h-6.0z M733.20,837.60h6.0v-65.69h-6.0z M742.07,837.60h6.0v-71.37h-6.0z M750.94,837.60h6.0v-67.25h-6.0z M759.81,837.60h6.0v-61.76h-6.0z M768.68,837.60h6.0v-60.00h-6.0z M777.56,837.60h6.0v-78.43h-6.0z M786.43,837.60h6.0v-65.69h-6.0z M795.30,837.60h6.0v-67.25h-6.0z M804.17,837.60h6.0v-62.55h-6.0z M813.04,837.60h6.0v-68.04h-6.0z M821.92,837.60h6.0v-68.04h-6.0z M830.79,837.60h6.0v-75.29h-6.0z M839.66,837.60h6.0v-72.16h-6.0z M848.53,837.60h6.0v-70.59h-6.0z M857.40,837.60h6.0v-80.00h-6.0z M866.28,837.60h6.0v-79.22h-6.0z M875.15,837.60h6.0v-76.08h-6.0z M884.02,837.60h6.0v-86.67h-6.0z M892.89,837.60h6.0v-65.69h-6.0z M901.76,837.60h6.0v-85.69h-6.0z M910.64,837.60h6.0v-84.12h-6.0z M919.51,837.60h6.0v-92.16h-6.0z M928.38,837.60h6.0v-75.29h-6.0z M937.25,837.60h6.0v-89.80h-6.0z M946.12,837.60h6.0v-78.43h-6.0z M955.00,837.60h6.0v-66.47h-6.0z M963.87,837.60h6.0v-63.33h-6.0z M972.74,837.60h6.0v-51.18h-6.0z M981.61,837.60h6.0v-70.59h-6.0z M990.48,837.60h6.0v-57.65h-6.0z M999.36,837.60h6.0v-63.33h-6.0z M1008.23,837.60h6.0v-65.69h-6.0z M1017.10,837.60h6.0v-65.69h-6.0z M1025.97,837.60h6.0v-59.41h-6.0z M1034.84,837.60h6.0v-67.25h-6.0z M1043.72,837.60h6.0v-66.47h-6.0z M1052.59,837.60h6.0v-51.18h-6.0z M1061.46,837.60h6.0v-63.33h-6.0z M1070.33,837.60h6.0v-68.04h-6.0z M1079.20,837.60h6.0v-53.73h-6.0z M1088.08,837.60h6.0v-56.08h-6.0z M1096.95,837.60h6.0v-58.43h-6.0z M1105.82,837.60h6.0v-51.96h-6.0z M1114.69,837.60h6.0v-65.69h-6.0z M1123.56,837.60h6.0v-68.04h-6.0z M1132.44,837.60h6.0v-71.37h-6.0z M1141.31,837.60h6.0v-70.59h-6.0z M1150.18,837.60h6.0v-55.29h-6.0z M1159.05,837.60h6.0v-54.51h-6.0z M1167.92,837.60h6.0v-62.55h-6.0z M1176.80,837.60h6.0v-70.59h-6.0z M1185.67,837.60h6.0v-51.96h-6.0z M1194.54,837.60h6.0v-72.16h-6.0z M1203.41,837.60h6.0v-60.00h-6.0z M1212.28,837.60h6.0v-58.43h-6.0z M1221.16,837.60h6.0v-69.61h-6.0z M1230.03,837.60h6.0v-78.43h-6.0z M1238.90,837.60h6.0v-68.04h-6.0z M1247.77,837.60h6.0v-63.33h-6.0z M1256.64,837.60h6.0v-58.43h-6.0z M1265.52,837.60h6.0v-61.76h-6.0z M1274.39,837.60h6.0v-63.33h-6.0z M1283.26,837.60h6.0v-85.69h-6.0z M1292.13,837.60h6.0v-60.00h-6.0z M1301.00,837.60h6.0v-67.25h-6.0z M1309.88,837.60h6.0v-72.16h-6.0z M1318.75,837.60h6.0v-58.43h-6.0z M1327.62,837.60h6.0v-69.61h-6.0z M1336.49,837.60h6.0v-61.76h-6.0z M1345.36,837.60h6.0v-59.41h-6.0z M1354.24,837.60h6.0v-68.04h-6.0z M1363.11,837.60h6.0v-74.51h-6.0z M1371.98,837.60h6.0v-62.55h-6.0z M1380.85,837.60h6.0v-71.37h-6.0z M1389.72,837.60h6.0v-62.55h-6.0z M1398.60,837.60h6.0v-76.08h-6.0z M1407.47,837.60h6.0v-67.25h-6.0z M1416.34,837.60h6.0v-71.37h-6.0z M1425.21,837.60h6.0v-65.69h-6.0z M1434.08,837.60h6.0v-64.12h-6.0z M1442.96,837.60h6.0v-59.41h-6.0z M1451.83,837.60h6.0v-62.55h-6.0z M1460.70,837.60h6.0v-63.33h-6.0z M1469.57,837.60h6.0v-57.65h-6.0z M1478.44,837.60h6.0v-72.16h-6.0z M1487.32,837.60h6.0v-67.25h-6.0z M1496.19,837.60h6.0v-67.25h-6.0z M1505.06,837.60h6.0v-62.55h-6.0z M1513.93,837.60h6.0v-70.59h-6.0z M1522.80,837.60h6.0v-57.65h-6.0z M1531.68,837.60h6.0v-64.12h-6.0z M1540.55,837.60h6.0v-68.04h-6.0z M1549.42,837.60h6.0v-74.51h-6.0z M1558.29,837.60h6.0v-67.25h-6.0z M1567.16,837.60h6.0v-60.00h-6.0z M1576.04,837.60h6.0v-59.41h-6.0z M1584.91,837.60h6.0v-76.08h-6.0z M1593.78,837.60h6.0v-58.43h-6.0z M1602.65,837.60h6.0v-62.55h-6.0z M1611.52,837.60h6.0v-60.00h-6.0z M1620.40,837.60h6.0v-1.57h-6.0z" fill="#0070c8"/>
<rect x="129.30" y="741.60" width="1498.30" height="1.30" fill="#f46a6a" />
<rect x="123.80" y="837.40" width="1503.80" height="1.00" fill="#bdbdbd" />
<path d="M129.30,838.40v4.2 M138.16,838.40v4.2 M147.03,838.40v4.2 M155.89,838.40v4.2 M164.76,838.40v4.2 M173.62,838.40v4.2 M182.48,838.40v4.2 M191.35,838.40v4.2 M200.21,838.40v4.2 M209.08,838.40v4.2 M217.94,838.40v4.2 M226.80,838.40v4.2 M235.67,838.40v4.2 M244.53,838.40v4.2 M253.40,838.40v4.2 M262.26,838.40v4.2 M271.12,838.40v4.2 M279.99,838.40v4.2 M288.85,838.40v4.2 M297.72,838.40v4.2 M306.58,838.40v4.2 M315.44,838.40v4.2 M324.31,838.40v4.2 M333.17,838.40v4.2 M342.04,838.40v4.2 M350.90,838.40v4.2 M359.76,838.40v4.2 M368.63,838.40v4.2 M377.49,838.40v4.2 M386.36,838.40v4.2 M395.22,838.40v4.2 M404.08,838.40v4.2 M412.95,838.40v4.2 M421.81,838.40v4.2 M430.68,838.40v4.2 M439.54,838.40v4.2 M448.40,838.40v4.2 M457.27,838.40v4.2 M466.13,838.40v4.2 M475.00,838.40v4.2 M483.86,838.40v4.2 M492.72,838.40v4.2 M501.59,838.40v4.2 M510.45,838.40v4.2 M519.32,838.40v4.2 M528.18,838.40v4.2 M537.04,838.40v4.2 M545.91,838.40v4.2 M554.77,838.40v4.2 M563.64,838.40v4.2 M572.50,838.40v4.2 M581.36,838.40v4.2 M590.23,838.40v4.2 M599.09,838.40v4.2 M607.96,838.40v4.2 M616.82,838.40v4.2 M625.68,838.40v4.2 M634.55,838.40v4.2 M643.41,838.40v4.2 M652.28,838.40v4.2 M661.14,838.40v4.2 M670.00,838.40v4.2 M678.87,838.40v4.2 M687.73,838.40v4.2 M696.60,838.40v4.2 M705.46,838.40v4.2 M714.32,838.40v4.2 M723.19,838.40v4.2 M732.05,838.40v4.2 M740.92,838.40v4.2 M749.78,838.40v4.2 M758.64,838.40v4.2 M767.51,838.40v4.2 M776.37,838.40v4.2 M785.24,838.40v4.2 M794.10,838.40v4.2 M802.96,838.40v4.2 M811.83,838.40v4.2 M820.69,838.40v4.2 M829.56,838.40v4.2 M838.42,838.40v4.2 M847.28,838.40v4.2 M856.15,838.40v4.2 M865.01,838.40v4.2 M873.88,838.40v4.2 M882.74,838.40v4.2 M891.60,838.40v4.2 M900.47,838.40v4.2 M909.33,838.40v4.2 M918.20,838.40v4.2 M927.06,838.40v4.2 M935.92,838.40v4.2 M944.79,838.40v4.2 M953.65,838.40v4.2 M962.52,838.40v4.2 M971.38,838.40v4.2 M980.24,838.40v4.2 M989.11,838.40v4.2 M997.97,838.40v4.2 M1006.84,838.40v4.2 M1015.70,838.40v4.2 M1024.56,838.40v4.2 M1033.43,838.40v4.2 M1042.29,838.40v4.2 M1051.16,838.40v4.2 M1060.02,838.40v4.2 M1068.88,838.40v4.2 M1077.75,838.40v4.2 M1086.61,838.40v4.2 M1095.48,838.40v4.2 M1104.34,838.40v4.2 M1113.20,838.40v4.2 M1122.07,838.40v4.2 M1130.93,838.40v4.2 M1139.80,838.40v4.2 M1148.66,838.40v4.2 M1157.52,838.40v4.2 M1166.39,838.40v4.2 M1175.25,838.40v4.2 M1184.12,838.40v4.2 M1192.98,838.40v4.2 M1201.84,838.40v4.2 M1210.71,838.40v4.2 M1219.57,838.40v4.2 M1228.44,838.40v4.2 M1237.30,838.40v4.2 M1246.16,838.40v4.2 M1255.03,838.40v4.2 M1263.89,838.40v4.2 M1272.76,838.40v4.2 M1281.62,838.40v4.2 M1290.48,838.40v4.2 M1299.35,838.40v4.2 M1308.21,838.40v4.2 M1317.08,838.40v4.2 M1325.94,838.40v4.2 M1334.80,838.40v4.2 M1343.67,838.40v4.2 M1352.53,838.40v4.2 M1361.40,838.40v4.2 M1370.26,838.40v4.2 M1379.12,838.40v4.2 M1387.99,838.40v4.2 M1396.85,838.40v4.2 M1405.72,838.40v4.2 M1414.58,838.40v4.2 M1423.44,838.40v4.2 M1432.31,838.40v4.2 M1441.17,838.40v4.2 M1450.04,838.40v4.2 M1458.90,838.40v4.2 M1467.76,838.40v4.2 M1476.63,838.40v4.2 M1485.49,838.40v4.2 M1494.36,838.40v4.2 M1503.22,838.40v4.2 M1512.08,838.40v4.2 M1520.95,838.40v4.2 M1529.81,838.40v4.2 M1538.68,838.40v4.2 M1547.54,838.40v4.2 M1556.40,838.40v4.2 M1565.27,838.40v4.2 M1574.13,838.40v4.2 M1583.00,838.40v4.2 M1591.86,838.40v4.2 M1600.72,838.40v4.2 M1609.59,838.40v4.2 M1618.45,838.40v4.2 M1627.32,838.40v4.2" stroke="#c4c4c4" stroke-width="1"/>
<text x="78.35" y="862.10" font-size="14.5" fill="#333" textLength="109.54" lengthAdjust="spacingAndGlyphs">2024-09-02 01:00</text>
<text x="211.43" y="862.10" font-size="14.5" fill="#333" textLength="109.54" lengthAdjust="spacingAndGlyphs">2024-09-02 16:00</text>
<text x="344.51" y="862.10" font-size="14.5" fill="#333" textLength="109.54" lengthAdjust="spacingAndGlyphs">2024-09-03 07:00</text>
<text x="477.59" y="862.10" font-size="14.5" fill="#333" textLength="109.54" lengthAdjust="spacingAndGlyphs">2024-09-03 22:00</text>
<text x="610.67" y="862.10" font-size="14.5" fill="#333" textLength="109.54" lengthAdjust="spacingAndGlyphs">2024-09-04 13:00</text>
<text x="743.75" y="862.10" font-size="14.5" fill="#333" textLength="109.54" lengthAdjust="spacingAndGlyphs">2024-09-05 04:00</text>
<text x="876.83" y="862.10" font-size="14.5" fill="#333" textLength="109.54" lengthAdjust="spacingAndGlyphs">2024-09-05 19:00</text>
<text x="1009.91" y="862.10" font-size="14.5" fill="#333" textLength="109.54" lengthAdjust="spacingAndGlyphs">2024-09-06 10:00</text>
<text x="1142.99" y="862.10" font-size="14.5" fill="#333" textLength="109.54" lengthAdjust="spacingAndGlyphs">2024-09-07 01:00</text>
<text x="1276.07" y="862.10" font-size="14.5" fill="#333" textLength="109.54" lengthAdjust="spacingAndGlyphs">2024-09-07 16:00</text>
<text x="1409.15" y="862.10" font-size="14.5" fill="#333" textLength="109.54" lengthAdjust="spacingAndGlyphs">2024-09-08 07:00</text>
<text x="1542.23" y="862.10" font-size="14.5" fill="#333" textLength="109.54" lengthAdjust="spacingAndGlyphs">2024-09-08 22:00</text>
<rect x="1500.00" y="659.60" width="10.40" height="1.30" fill="#f03c3c" />
<text x="1514.19" y="664.50" font-size="14.5" fill="#333" textLength="61.71" lengthAdjust="spacingAndGlyphs">Threshold</text>
<rect x="1595.60" y="654.50" width="9.50" height="9.50" fill="#0070c8" />
<text x="1607.66" y="664.50" font-size="14.5" fill="#333" textLength="55.62" lengthAdjust="spacingAndGlyphs">Maskin 1</text>
<g filter="url(#sh)">
<rect x="1691.70" y="646.70" width="180.40" height="37.00" fill="#fafafa" rx="2"/>
</g>
<text x="1770.92" y="671.30" font-size="14.5" fill="#333" textLength="22.74" lengthAdjust="spacingAndGlyphs">Fan</text>
<g filter="url(#sh)">
<rect x="1691.70" y="694.70" width="180.40" height="37.00" fill="#fafafa" rx="2"/>
</g>
<text x="1749.86" y="719.30" font-size="14.5" fill="#333" textLength="65.04" lengthAdjust="spacingAndGlyphs">Packaging</text>
<g filter="url(#sh)">
<rect x="1691.70" y="742.00" width="180.40" height="37.00" fill="#fafafa" rx="2"/>
</g>
<text x="1724.27" y="766.60" font-size="14.5" fill="#333" textLength="116.30" lengthAdjust="spacingAndGlyphs">Machine 1 phase 1</text>
<g filter="url(#sh)">
<rect x="1691.70" y="789.50" width="180.40" height="37.00" fill="#fafafa" rx="2"/>
</g>
<text x="1724.27" y="814.10" font-size="14.5" fill="#333" textLength="116.32" lengthAdjust="spacingAndGlyphs">Machine 1 phase 2</text>
<g filter="url(#sh)">
<rect x="114.90" y="871.00" width="1540.90" height="76.00" fill="#fafafa" />
</g>
<rect x="115.50" y="871.30" width="218.90" height="3.60" fill="#e5e5e5" />
<text x="137.88" y="892.90" font-size="14.5" fill="#555" textLength="172.52" lengthAdjust="spacingAndGlyphs">måndag, september 2, 2024</text>
<rect x="335.03" y="871.00" width="220.13" height="76.00" fill="#f3f3f3" />
<rect x="335.63" y="871.30" width="218.90" height="3.60" fill="#e5e5e5" />
<text x="365.29" y="892.90" font-size="14.5" fill="#555" textLength="159.11" lengthAdjust="spacingAndGlyphs">tisdag, september 3, 2024</text>
<rect x="555.76" y="871.30" width="218.90" height="3.60" fill="#e5e5e5" />
<text x="580.52" y="892.90" font-size="14.5" fill="#555" textLength="167.58" lengthAdjust="spacingAndGlyphs">onsdag, september 4, 2024</text>
<rect x="775.29" y="871.00" width="220.13" height="76.00" fill="#f3f3f3" />
<rect x="775.89" y="871.30" width="218.90" height="3.60" fill="#e5e5e5" />
<text x="800.09" y="892.90" font-size="14.5" fill="#555" textLength="169.11" lengthAdjust="spacingAndGlyphs">torsdag, september 5, 2024</text>
<rect x="996.02" y="871.30" width="218.90" height="3.60" fill="#e5e5e5" />
<text x="1023.80" y="892.90" font-size="14.5" fill="#555" textLength="161.70" lengthAdjust="spacingAndGlyphs">fredag, september 6, 2024</text>
<rect x="1215.55" y="871.00" width="220.13" height="76.00" fill="#f3f3f3" />
<rect x="1216.15" y="871.30" width="218.90" height="3.60" fill="#e5e5e5" />
<text x="1243.06" y="892.90" font-size="14.5" fill="#555" textLength="162.14" lengthAdjust="spacingAndGlyphs">lördag, september 7, 2024</text>
<rect x="1436.28" y="871.30" width="218.90" height="3.60" fill="#e5e5e5" />
<text x="1461.02" y="892.90" font-size="14.5" fill="#555" textLength="167.79" lengthAdjust="spacingAndGlyphs">söndag, september 8, 2024</text>
<rect x="114.90" y="915.10" width="44.60" height="24.00" fill="#008000" />
<rect x="160.50" y="915.10" width="174.50" height="24.00" fill="#d22228" />
<rect x="335.00" y="915.10" width="220.00" height="24.00" fill="#a9a9a9" />
<rect x="555.00" y="915.10" width="89.30" height="24.00" fill="#d22228" />
<rect x="644.30" y="915.10" width="350.70" height="24.00" fill="#008000" />
<rect x="996.00" y="915.10" width="86.20" height="24.00" fill="#008000" />
<rect x="1082.20" y="915.10" width="132.40" height="24.00" fill="#d22228" />
<rect x="1215.60" y="915.10" width="219.90" height="24.00" fill="#d22228" />
<rect x="1435.50" y="915.10" width="220.30" height="24.00" fill="#a9a9a9" />
<rect x="995.00" y="915.10" width="1.00" height="24.00" fill="#e8f0e8" />
<rect x="1214.60" y="915.10" width="1.00" height="24.00" fill="#f3d0d0" />
<g filter="url(#shc)"><circle cx="93.2" cy="986" r="16" fill="#fbfbfb"/></g>
<path d="M89.0,988.2 L93.2,984 L97.4,988.2" stroke="#222" stroke-width="1.6" fill="none" stroke-linecap="round" stroke-linejoin="round"/>
<text x="120.56" y="995.50" font-size="24" fill="#222" textLength="99.39" lengthAdjust="spacingAndGlyphs">Maskin 2</text>
<text x="1596.05" y="995.80" font-size="24" fill="#1e1e1e" textLength="26.76" lengthAdjust="spacingAndGlyphs">47</text>
<text x="1629.97" y="995.80" font-size="14.5" fill="#1e1e1e" textLength="30.63" lengthAdjust="spacingAndGlyphs">kWh</text>
<line x1="1669.50" y1="995.50" x2="1674.50" y2="985.50" stroke="#2a2a2a" stroke-width="1.3"/>
<text x="1685.45" y="995.80" font-size="24" fill="#1e1e1e" textLength="26.76" lengthAdjust="spacingAndGlyphs">47</text>
<text x="1719.52" y="995.80" font-size="14.5" fill="#1e1e1e" textLength="60.29" lengthAdjust="spacingAndGlyphs">kg (CO2e)</text>
<line x1="1789.20" y1="995.50" x2="1795.20" y2="985.50" stroke="#2a2a2a" stroke-width="1.3"/>
<text x="1804.76" y="995.80" font-size="24" fill="#1e1e1e" textLength="41.28" lengthAdjust="spacingAndGlyphs">245</text>
<text x="1851.14" y="995.80" font-size="14.5" fill="#1e1e1e" textLength="24.60" lengthAdjust="spacingAndGlyphs">SEK</text>
<rect x="75.00" y="1007.30" width="1607.00" height="4.60" fill="#ffffff" />
<g filter="url(#sh)">
<rect x="1691.70" y="1007.30" width="180.40" height="4.60" fill="#fafafa" />
</g>
<rect x="49.00" y="1012.00" width="1867.00" height="8.00" fill="#f5f5f5" />
</svg></body></html>
